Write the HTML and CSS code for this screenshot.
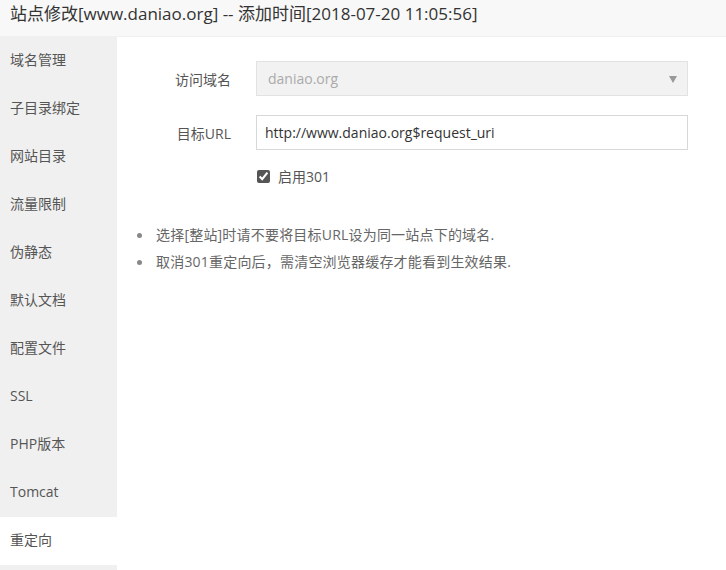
FILE: index.html
```html
<!DOCTYPE html>
<html lang="zh-CN">
<head>
  <meta charset="UTF-8">
  <title>站点修改</title>
  <link rel="stylesheet" href="styles.css">
</head>
<body>
  <div class="header">站点修改[www.daniao.org] -- 添加时间[2018-07-20 11:05:56]</div>
  <div class="main">
    <ul class="sidebar">
      <li>域名管理</li>
      <li>子目录绑定</li>
      <li>网站目录</li>
      <li>流量限制</li>
      <li>伪静态</li>
      <li>默认文档</li>
      <li>配置文件</li>
      <li>SSL</li>
      <li>PHP版本</li>
      <li>Tomcat</li>
      <li class="active">重定向</li>
    </ul>
    <div class="content">
      <div class="row">
        <span class="label">访问域名</span>
        <div class="select">
          <span>daniao.org</span>
          <span class="arrow"></span>
        </div>
      </div>
      <div class="row">
        <span class="label">目标URL</span>
        <input class="text-input" type="text" value="http://www.daniao.org$request_uri">
      </div>
      <div class="check-row">
        <input type="checkbox" id="enable301" checked>
        <label for="enable301">启用301</label>
      </div>
      <ul class="notes">
        <li>选择[整站]时请不要将目标URL设为同一站点下的域名.</li>
        <li>取消301重定向后，需清空浏览器缓存才能看到生效结果.</li>
      </ul>
    </div>
  </div>
</body>
</html>
```

FILE: styles.css
```css
* {
  margin: 0;
  padding: 0;
  box-sizing: border-box;
}

html, body {
  height: 570px;
  overflow: hidden;
}

body {
  font-family: "Open Sans", "Noto Sans CJK SC", sans-serif;
  background: #fff;
  color: #555;
}

.header {
  height: 37px;
  padding: 1px 0 0 10px;
  font-size: 17px;
  line-height: 26px;
  color: #333;
  background: #f8f8f8;
  border-bottom: 1px solid #f0f0f0;
}

.main {
  display: flex;
  height: 533px;
}

.sidebar {
  list-style: none;
  width: 117px;
  background: #f0f0f0;
  flex-shrink: 0;
}

.sidebar li {
  height: 48px;
  line-height: 46px;
  padding-left: 10px;
  font-size: 14px;
  color: #555;
}

.sidebar li.active {
  background: #fff;
}

.content {
  flex: 1;
  padding: 24px 0 0 20px;
}

.row {
  display: flex;
  align-items: center;
  margin-bottom: 19px;
}

.label {
  width: 94px;
  margin-right: 25px;
  text-align: right;
  font-size: 14px;
  color: #555;
}

.select {
  width: 432px;
  height: 35px;
  border: 1px solid #e2e2e2;
  background: #f2f2f2;
  display: flex;
  align-items: center;
  justify-content: space-between;
  padding: 0 10px 0 11px;
  font-size: 14px;
  color: #aaa;
}

.arrow {
  width: 0;
  height: 0;
  border-left: 4px solid transparent;
  border-right: 4px solid transparent;
  border-top: 7px solid #999;
  margin-top: 1px;
}

.text-input {
  width: 432px;
  height: 35px;
  border: 1px solid #d8d8d8;
  padding: 0 8px;
  font-family: "Open Sans", "Noto Sans CJK SC", sans-serif;
  font-size: 14px;
  color: #333;
  outline: none;
}

.check-row {
  display: flex;
  align-items: center;
  margin: -3px 0 0 119px;
  font-size: 14px;
  color: #555;
}

.check-row input {
  width: 13px;
  height: 13px;
  margin: 0 8px 0 1px;
  accent-color: #555;
}

.notes {
  margin-top: 35px;
  list-style: none;
  font-size: 14px;
  color: #666;
}

.notes li {
  position: relative;
  padding-left: 19px;
  line-height: 27px;
  letter-spacing: 0.2px;
}

.notes li::before {
  content: '';
  position: absolute;
  left: 0;
  top: 12px;
  width: 5px;
  height: 5px;
  border-radius: 50%;
  background: #888;
}
```
